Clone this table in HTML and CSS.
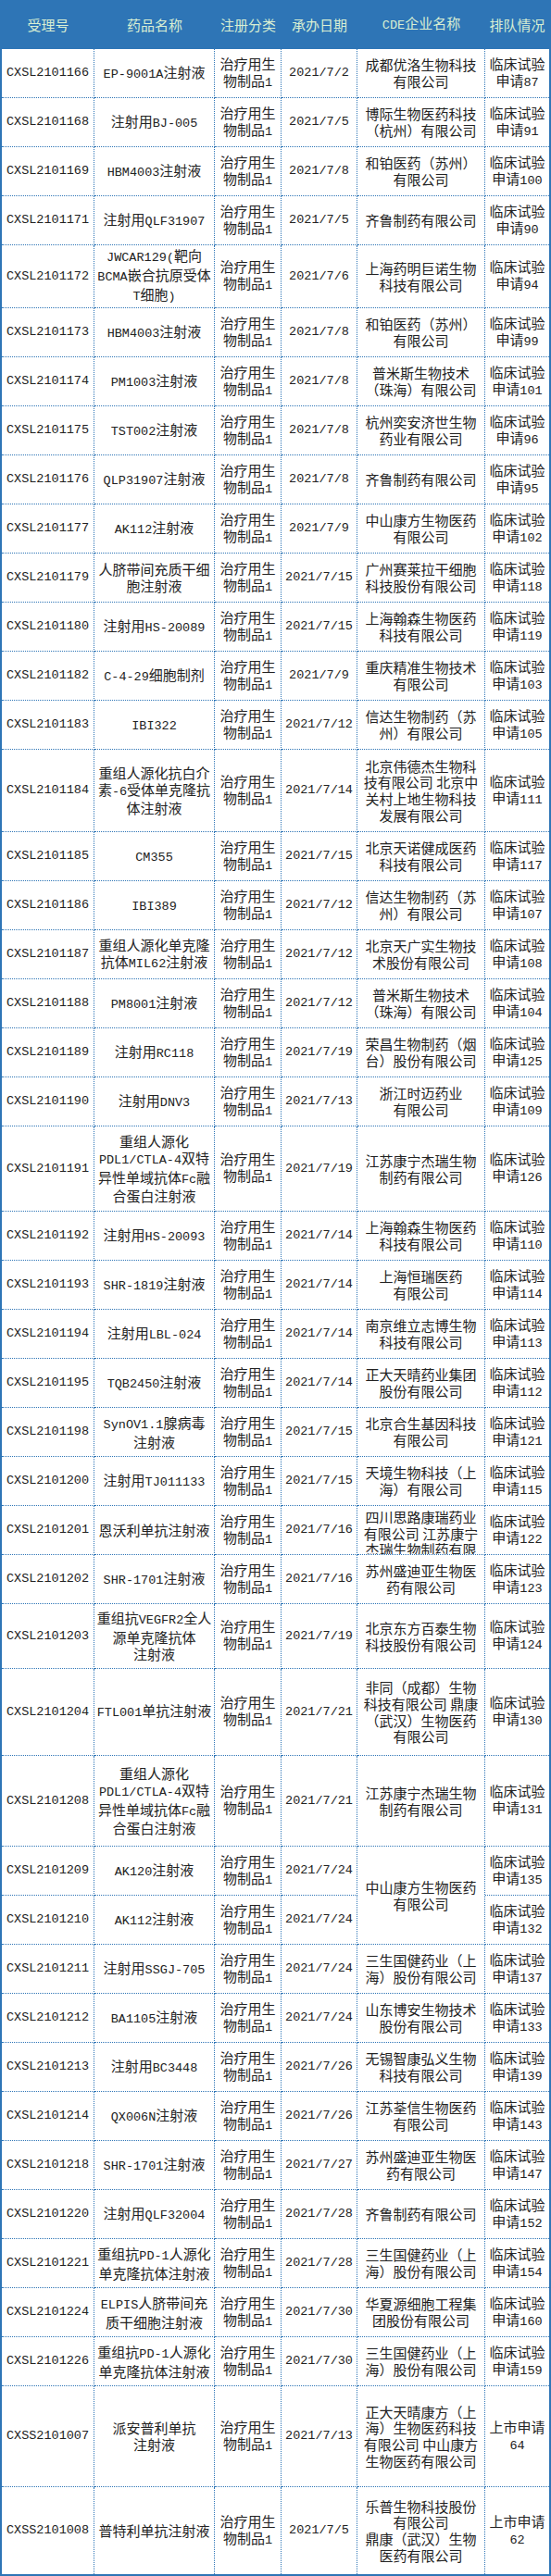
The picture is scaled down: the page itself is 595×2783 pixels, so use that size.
FILE: index.html
```html
<!DOCTYPE html>
<html lang="zh-CN">
<head>
<meta charset="utf-8">
<title>CDE 排队情况</title>
<link rel="stylesheet" href="styles.css">
</head>
<body>
<div class="sheet">
<table class="grid">
<colgroup>
<col class="c1"><col class="c2"><col class="c3"><col class="c4"><col class="c5"><col class="c6">
</colgroup>
<thead>
<tr><th>受理号</th><th>药品名称</th><th>注册分类</th><th>承办日期</th><th><span class="a">CDE</span>企业名称</th><th>排队情况</th></tr>
</thead>
<tbody>
<tr><td class="m">CXSL2101166</td><td><span class="a">EP-9001A</span>注射液</td><td>治疗用生<br>物制品<span class="a">1</span></td><td class="m">2021/7/2</td><td>成都优洛生物科技<br>有限公司</td><td>临床试验<br>申请<span class="a">87</span></td></tr>
<tr><td class="m">CXSL2101168</td><td>注射用<span class="a">BJ-005</span></td><td>治疗用生<br>物制品<span class="a">1</span></td><td class="m">2021/7/5</td><td>博际生物医药科技<br>（杭州）有限公司</td><td>临床试验<br>申请<span class="a">91</span></td></tr>
<tr><td class="m">CXSL2101169</td><td><span class="a">HBM4003</span>注射液</td><td>治疗用生<br>物制品<span class="a">1</span></td><td class="m">2021/7/8</td><td>和铂医药（苏州）<br>有限公司</td><td>临床试验<br>申请<span class="a">100</span></td></tr>
<tr><td class="m">CXSL2101171</td><td>注射用<span class="a">QLF31907</span></td><td>治疗用生<br>物制品<span class="a">1</span></td><td class="m">2021/7/5</td><td>齐鲁制药有限公司</td><td>临床试验<br>申请<span class="a">90</span></td></tr>
<tr class="h68"><td class="m">CXSL2101172</td><td><span class="a">JWCAR129(</span>靶向<br><span class="a">BCMA</span>嵌合抗原受体<br><span class="a">T</span>细胞<span class="a">)</span></td><td>治疗用生<br>物制品<span class="a">1</span></td><td class="m">2021/7/6</td><td>上海药明巨诺生物<br>科技有限公司</td><td>临床试验<br>申请<span class="a">94</span></td></tr>
<tr><td class="m">CXSL2101173</td><td><span class="a">HBM4003</span>注射液</td><td>治疗用生<br>物制品<span class="a">1</span></td><td class="m">2021/7/8</td><td>和铂医药（苏州）<br>有限公司</td><td>临床试验<br>申请<span class="a">99</span></td></tr>
<tr><td class="m">CXSL2101174</td><td><span class="a">PM1003</span>注射液</td><td>治疗用生<br>物制品<span class="a">1</span></td><td class="m">2021/7/8</td><td>普米斯生物技术<br>（珠海）有限公司</td><td>临床试验<br>申请<span class="a">101</span></td></tr>
<tr><td class="m">CXSL2101175</td><td><span class="a">TST002</span>注射液</td><td>治疗用生<br>物制品<span class="a">1</span></td><td class="m">2021/7/8</td><td>杭州奕安济世生物<br>药业有限公司</td><td>临床试验<br>申请<span class="a">96</span></td></tr>
<tr><td class="m">CXSL2101176</td><td><span class="a">QLP31907</span>注射液</td><td>治疗用生<br>物制品<span class="a">1</span></td><td class="m">2021/7/8</td><td>齐鲁制药有限公司</td><td>临床试验<br>申请<span class="a">95</span></td></tr>
<tr><td class="m">CXSL2101177</td><td><span class="a">AK112</span>注射液</td><td>治疗用生<br>物制品<span class="a">1</span></td><td class="m">2021/7/9</td><td>中山康方生物医药<br>有限公司</td><td>临床试验<br>申请<span class="a">102</span></td></tr>
<tr><td class="m">CXSL2101179</td><td>人脐带间充质干细<br>胞注射液</td><td>治疗用生<br>物制品<span class="a">1</span></td><td class="m">2021/7/15</td><td>广州赛莱拉干细胞<br>科技股份有限公司</td><td>临床试验<br>申请<span class="a">118</span></td></tr>
<tr><td class="m">CXSL2101180</td><td>注射用<span class="a">HS-20089</span></td><td>治疗用生<br>物制品<span class="a">1</span></td><td class="m">2021/7/15</td><td>上海翰森生物医药<br>科技有限公司</td><td>临床试验<br>申请<span class="a">119</span></td></tr>
<tr><td class="m">CXSL2101182</td><td><span class="a">C-4-29</span>细胞制剂</td><td>治疗用生<br>物制品<span class="a">1</span></td><td class="m">2021/7/9</td><td>重庆精准生物技术<br>有限公司</td><td>临床试验<br>申请<span class="a">103</span></td></tr>
<tr><td class="m">CXSL2101183</td><td><span class="a">IBI322</span></td><td>治疗用生<br>物制品<span class="a">1</span></td><td class="m">2021/7/12</td><td>信达生物制药（苏<br>州）有限公司</td><td>临床试验<br>申请<span class="a">105</span></td></tr>
<tr class="h89"><td class="m">CXSL2101184</td><td>重组人源化抗白介<br>素<span class="a">-6</span>受体单克隆抗<br>体注射液</td><td>治疗用生<br>物制品<span class="a">1</span></td><td class="m">2021/7/14</td><td>北京伟德杰生物科<br>技有限公司 北京中<br>关村上地生物科技<br>发展有限公司</td><td>临床试验<br>申请<span class="a">111</span></td></tr>
<tr><td class="m">CXSL2101185</td><td><span class="a">CM355</span></td><td>治疗用生<br>物制品<span class="a">1</span></td><td class="m">2021/7/15</td><td>北京天诺健成医药<br>科技有限公司</td><td>临床试验<br>申请<span class="a">117</span></td></tr>
<tr><td class="m">CXSL2101186</td><td><span class="a">IBI389</span></td><td>治疗用生<br>物制品<span class="a">1</span></td><td class="m">2021/7/12</td><td>信达生物制药（苏<br>州）有限公司</td><td>临床试验<br>申请<span class="a">107</span></td></tr>
<tr><td class="m">CXSL2101187</td><td>重组人源化单克隆<br>抗体<span class="a">MIL62</span>注射液</td><td>治疗用生<br>物制品<span class="a">1</span></td><td class="m">2021/7/12</td><td>北京天广实生物技<br>术股份有限公司</td><td>临床试验<br>申请<span class="a">108</span></td></tr>
<tr><td class="m">CXSL2101188</td><td><span class="a">PM8001</span>注射液</td><td>治疗用生<br>物制品<span class="a">1</span></td><td class="m">2021/7/12</td><td>普米斯生物技术<br>（珠海）有限公司</td><td>临床试验<br>申请<span class="a">104</span></td></tr>
<tr><td class="m">CXSL2101189</td><td>注射用<span class="a">RC118</span></td><td>治疗用生<br>物制品<span class="a">1</span></td><td class="m">2021/7/19</td><td>荣昌生物制药（烟<br>台）股份有限公司</td><td>临床试验<br>申请<span class="a">125</span></td></tr>
<tr><td class="m">CXSL2101190</td><td>注射用<span class="a">DNV3</span></td><td>治疗用生<br>物制品<span class="a">1</span></td><td class="m">2021/7/13</td><td>浙江时迈药业<br>有限公司</td><td>临床试验<br>申请<span class="a">109</span></td></tr>
<tr class="h92"><td class="m">CXSL2101191</td><td>重组人源化<br><span class="a">PDL1/CTLA-4</span>双特<br>异性单域抗体<span class="a">Fc</span>融<br>合蛋白注射液</td><td>治疗用生<br>物制品<span class="a">1</span></td><td class="m">2021/7/19</td><td>江苏康宁杰瑞生物<br>制药有限公司</td><td>临床试验<br>申请<span class="a">126</span></td></tr>
<tr><td class="m">CXSL2101192</td><td>注射用<span class="a">HS-20093</span></td><td>治疗用生<br>物制品<span class="a">1</span></td><td class="m">2021/7/14</td><td>上海翰森生物医药<br>科技有限公司</td><td>临床试验<br>申请<span class="a">110</span></td></tr>
<tr><td class="m">CXSL2101193</td><td><span class="a">SHR-1819</span>注射液</td><td>治疗用生<br>物制品<span class="a">1</span></td><td class="m">2021/7/14</td><td>上海恒瑞医药<br>有限公司</td><td>临床试验<br>申请<span class="a">114</span></td></tr>
<tr><td class="m">CXSL2101194</td><td>注射用<span class="a">LBL-024</span></td><td>治疗用生<br>物制品<span class="a">1</span></td><td class="m">2021/7/14</td><td>南京维立志博生物<br>科技有限公司</td><td>临床试验<br>申请<span class="a">113</span></td></tr>
<tr><td class="m">CXSL2101195</td><td><span class="a">TQB2450</span>注射液</td><td>治疗用生<br>物制品<span class="a">1</span></td><td class="m">2021/7/14</td><td>正大天晴药业集团<br>股份有限公司</td><td>临床试验<br>申请<span class="a">112</span></td></tr>
<tr><td class="m">CXSL2101198</td><td><span class="a">SynOV1.1</span>腺病毒<br>注射液</td><td>治疗用生<br>物制品<span class="a">1</span></td><td class="m">2021/7/15</td><td>北京合生基因科技<br>有限公司</td><td>临床试验<br>申请<span class="a">121</span></td></tr>
<tr><td class="m">CXSL2101200</td><td>注射用<span class="a">TJ011133</span></td><td>治疗用生<br>物制品<span class="a">1</span></td><td class="m">2021/7/15</td><td>天境生物科技（上<br>海）有限公司</td><td>临床试验<br>申请<span class="a">115</span></td></tr>
<tr><td class="m">CXSL2101201</td><td>恩沃利单抗注射液</td><td>治疗用生<br>物制品<span class="a">1</span></td><td class="m">2021/7/16</td><td class="cut"><div class="clip">四川思路康瑞药业<br>有限公司 江苏康宁<br>杰瑞生物制药有限<br>公司</div></td><td>临床试验<br>申请<span class="a">122</span></td></tr>
<tr><td class="m">CXSL2101202</td><td><span class="a">SHR-1701</span>注射液</td><td>治疗用生<br>物制品<span class="a">1</span></td><td class="m">2021/7/16</td><td>苏州盛迪亚生物医<br>药有限公司</td><td>临床试验<br>申请<span class="a">123</span></td></tr>
<tr class="h70"><td class="m">CXSL2101203</td><td>重组抗<span class="a">VEGFR2</span>全人<br>源单克隆抗体<br>注射液</td><td>治疗用生<br>物制品<span class="a">1</span></td><td class="m">2021/7/19</td><td>北京东方百泰生物<br>科技股份有限公司</td><td>临床试验<br>申请<span class="a">124</span></td></tr>
<tr class="h94"><td class="m">CXSL2101204</td><td><span class="a">FTL001</span>单抗注射液</td><td>治疗用生<br>物制品<span class="a">1</span></td><td class="m">2021/7/21</td><td>非同（成都）生物<br>科技有限公司 鼎康<br>（武汉）生物医药<br>有限公司</td><td>临床试验<br>申请<span class="a">130</span></td></tr>
<tr class="h98"><td class="m">CXSL2101208</td><td>重组人源化<br><span class="a">PDL1/CTLA-4</span>双特<br>异性单域抗体<span class="a">Fc</span>融<br>合蛋白注射液</td><td>治疗用生<br>物制品<span class="a">1</span></td><td class="m">2021/7/21</td><td>江苏康宁杰瑞生物<br>制药有限公司</td><td>临床试验<br>申请<span class="a">131</span></td></tr>
<tr><td class="m">CXSL2101209</td><td><span class="a">AK120</span>注射液</td><td>治疗用生<br>物制品<span class="a">1</span></td><td class="m">2021/7/24</td><td rowspan="2">中山康方生物医药<br>有限公司</td><td>临床试验<br>申请<span class="a">135</span></td></tr>
<tr><td class="m">CXSL2101210</td><td><span class="a">AK112</span>注射液</td><td>治疗用生<br>物制品<span class="a">1</span></td><td class="m">2021/7/24</td><td>临床试验<br>申请<span class="a">132</span></td></tr>
<tr><td class="m">CXSL2101211</td><td>注射用<span class="a">SSGJ-705</span></td><td>治疗用生<br>物制品<span class="a">1</span></td><td class="m">2021/7/24</td><td>三生国健药业（上<br>海）股份有限公司</td><td>临床试验<br>申请<span class="a">137</span></td></tr>
<tr><td class="m">CXSL2101212</td><td><span class="a">BA1105</span>注射液</td><td>治疗用生<br>物制品<span class="a">1</span></td><td class="m">2021/7/24</td><td>山东博安生物技术<br>股份有限公司</td><td>临床试验<br>申请<span class="a">133</span></td></tr>
<tr><td class="m">CXSL2101213</td><td>注射用<span class="a">BC3448</span></td><td>治疗用生<br>物制品<span class="a">1</span></td><td class="m">2021/7/26</td><td>无锡智康弘义生物<br>科技有限公司</td><td>临床试验<br>申请<span class="a">139</span></td></tr>
<tr><td class="m">CXSL2101214</td><td><span class="a">QX006N</span>注射液</td><td>治疗用生<br>物制品<span class="a">1</span></td><td class="m">2021/7/26</td><td>江苏荃信生物医药<br>有限公司</td><td>临床试验<br>申请<span class="a">143</span></td></tr>
<tr><td class="m">CXSL2101218</td><td><span class="a">SHR-1701</span>注射液</td><td>治疗用生<br>物制品<span class="a">1</span></td><td class="m">2021/7/27</td><td>苏州盛迪亚生物医<br>药有限公司</td><td>临床试验<br>申请<span class="a">147</span></td></tr>
<tr><td class="m">CXSL2101220</td><td>注射用<span class="a">QLF32004</span></td><td>治疗用生<br>物制品<span class="a">1</span></td><td class="m">2021/7/28</td><td>齐鲁制药有限公司</td><td>临床试验<br>申请<span class="a">152</span></td></tr>
<tr><td class="m">CXSL2101221</td><td>重组抗<span class="a">PD-1</span>人源化<br>单克隆抗体注射液</td><td>治疗用生<br>物制品<span class="a">1</span></td><td class="m">2021/7/28</td><td>三生国健药业（上<br>海）股份有限公司</td><td>临床试验<br>申请<span class="a">154</span></td></tr>
<tr><td class="m">CXSL2101224</td><td><span class="a">ELPIS</span>人脐带间充<br>质干细胞注射液</td><td>治疗用生<br>物制品<span class="a">1</span></td><td class="m">2021/7/30</td><td>华夏源细胞工程集<br>团股份有限公司</td><td>临床试验<br>申请<span class="a">160</span></td></tr>
<tr><td class="m">CXSL2101226</td><td>重组抗<span class="a">PD-1</span>人源化<br>单克隆抗体注射液</td><td>治疗用生<br>物制品<span class="a">1</span></td><td class="m">2021/7/30</td><td>三生国健药业（上<br>海）股份有限公司</td><td>临床试验<br>申请<span class="a">159</span></td></tr>
<tr class="h109"><td class="m">CXSS2101007</td><td>派安普利单抗<br>注射液</td><td>治疗用生<br>物制品<span class="a">1</span></td><td class="m">2021/7/13</td><td>正大天晴康方（上<br>海）生物医药科技<br>有限公司 中山康方<br>生物医药有限公司</td><td>上市申请<br><span class="a">64</span></td></tr>
<tr class="h94"><td class="m">CXSS2101008</td><td>普特利单抗注射液</td><td>治疗用生<br>物制品<span class="a">1</span></td><td class="m">2021/7/5</td><td>乐普生物科技股份<br>有限公司<br>鼎康（武汉）生物<br>医药有限公司</td><td>上市申请<br><span class="a">62</span></td></tr>
</tbody>
</table>
</div>
</body>
</html>
```
FILE: styles.css
```css
html, body {
  margin: 0;
  padding: 0;
  background: #ffffff;
}

.sheet {
  width: 595px;
  box-sizing: border-box;
  border-left: 2px solid #2e75b6;
  border-right: 2px solid #2e75b6;
  border-bottom: 2px solid #2e75b6;
  background: #ffffff;
}

.grid {
  width: 100%;
  border-collapse: separate;
  border-spacing: 0;
  table-layout: fixed;
  font-family: "Noto Sans CJK SC", sans-serif;
  font-size: 15px;
  line-height: 17.7px;
}

.c1 { width: 100px; }
.c2 { width: 130px; }
.c3 { width: 72px; }
.c4 { width: 82px; }
.c5 { width: 138px; }
.c6 { width: 69px; }

.grid thead tr { height: 53px; }
.grid tbody tr { height: 53px; }
.grid tbody tr.h68 { height: 68px; }
.grid tbody tr.h70 { height: 70px; }
.grid tbody tr.h89 { height: 89px; }
.grid tbody tr.h92 { height: 92px; }
.grid tbody tr.h94 { height: 94px; }
.grid tbody tr.h98 { height: 98px; }
.grid tbody tr.h109 { height: 109px; }

.grid th {
  background: #2e75b6;
  color: #d9efd3;
  font-weight: normal;
  padding: 0;
  text-align: center;
  vertical-align: middle;
  white-space: nowrap;
}

.grid td {
  border-right: 1px dotted #2e75b6;
  border-bottom: 1px dotted #2e75b6;
  padding: 0 1px;
  text-align: center;
  vertical-align: middle;
  white-space: nowrap;
  color: #222222;
}

.grid td:last-child { border-right: none; }
.grid tbody tr:last-child td { border-bottom: none; }

.grid .m,
.grid .a {
  font-family: "Liberation Mono", monospace;
  font-size: 13.5px;
}

.grid td.cut { padding: 0 1px; }

.clip {
  height: 49px;
  padding-top: 3px;
  overflow: hidden;
}
```
